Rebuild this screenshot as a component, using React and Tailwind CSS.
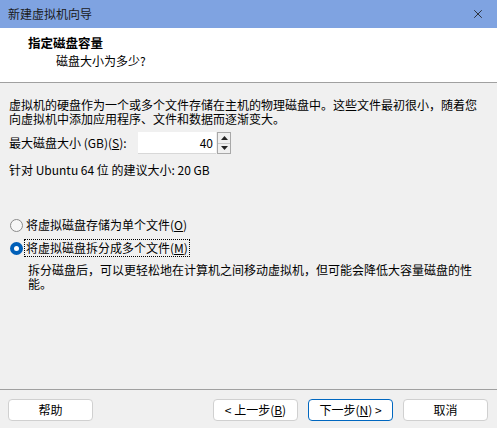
import { X } from 'lucide-react'

const font = { fontFamily: '"Noto Sans CJK SC", "Microsoft YaHei", sans-serif' }

function Radio({ checked, children }) {
  return (
    <div className="flex items-center h-[20px]">
      <span
        className={`w-[13px] h-[13px] ml-[10px] rounded-full flex items-center justify-center shrink-0 ${
          checked ? 'bg-[#005fb8]' : 'bg-[#f7f7f7] border border-[#8a8a8a]'
        }`}
      >
        {checked && <span className="w-[5px] h-[5px] rounded-full bg-white" />}
      </span>
      <span
        className={`ml-[2px] px-px leading-[16px] ${
          checked ? 'outline outline-1 outline-dotted outline-black' : ''
        }`}
      >
        {children}
      </span>
    </div>
  )
}

function Btn({ children, primary }) {
  return (
    <button
      className={`w-[85px] h-[22px] rounded-[4px] bg-white text-[12px] leading-none text-black ${
        primary ? 'border border-[#0067c0]' : 'border border-[#d0d0d0]'
      }`}
      style={font}
    >
      {children}
    </button>
  )
}

export default function App() {
  return (
    <div className="w-[497px] h-[428px] flex flex-col bg-[#f0f0f0] text-[12px] text-black overflow-hidden" style={font}>
      {/* Title bar */}
      <div className="h-[28px] bg-[#7fa3e1] flex items-center justify-between pl-[8px] pr-[12px] shrink-0">
        <span className="text-[12px] text-[#1a1a1a]">新建虚拟机向导</span>
        <X size={14} strokeWidth={1.4} className="text-[#1a1a1a]" />
      </div>

      {/* Header */}
      <div className="h-[55px] bg-white border-b border-[#a0a0a0] shrink-0 pt-[7px]">
        <div className="pl-[28px] font-bold text-[12.5px] leading-[16px]">指定磁盘容量</div>
        <div className="pl-[56px] mt-[2px] leading-[16px]">磁盘大小为多少?</div>
      </div>

      {/* Body */}
      <div className="flex-1 flex flex-col px-[9px] pt-[15px]">
        <p className="leading-[14px]">
          虚拟机的硬盘作为一个或多个文件存储在主机的物理磁盘中。这些文件最初很小，随着您向虚拟机中添加应用程序、文件和数据而逐渐变大。
        </p>

        <div className="flex items-center mt-[6px] h-[22px]">
          <span className="w-[129px] leading-[16px]">
            最大磁盘大小 (GB)(<span className="underline">S</span>):
          </span>
          <div className="w-[78px] h-[22px] bg-white border-b border-[#d8d8d8] flex items-center justify-end pr-[3px]">
            40
          </div>
          <div className="w-[14px] h-[22px] flex flex-col bg-[#f0f0f0] border border-[#a8a8a8] ml-px">
            <div className="flex-1 flex items-center justify-center border-b border-[#c8c8c8]">
              <svg width="7" height="4" viewBox="0 0 7 4"><path d="M0 4 L3.5 0 L7 4 Z" fill="#222" /></svg>
            </div>
            <div className="flex-1 flex items-center justify-center">
              <svg width="7" height="4" viewBox="0 0 7 4"><path d="M0 0 L3.5 4 L7 0 Z" fill="#222" /></svg>
            </div>
          </div>
        </div>

        <div className="mt-[8px] leading-[16px]">针对 Ubuntu 64 位 的建议大小: 20 GB</div>

        <div className="-mx-[9px] mt-[37px]">
          <Radio>
            将虚拟磁盘存储为单个文件(<span className="underline">O</span>)
          </Radio>
          <div className="mt-[3px]">
            <Radio checked>
              将虚拟磁盘拆分成多个文件(<span className="underline">M</span>)
            </Radio>
          </div>
          <p className="pl-[28px] pr-[20px] mt-[5px] leading-[14px]">
            拆分磁盘后，可以更轻松地在计算机之间移动虚拟机，但可能会降低大容量磁盘的性能。
          </p>
        </div>
      </div>

      {/* Footer */}
      <div className="h-[39px] border-t border-[#a0a0a0] shrink-0 flex items-start pt-[9px] px-[8px]">
        <Btn>帮助</Btn>
        <div className="flex-1" />
        <div className="flex gap-[10px] mr-px">
          <Btn>&lt; 上一步(<span className="underline">B</span>)</Btn>
          <Btn primary>下一步(<span className="underline">N</span>) &gt;</Btn>
          <Btn>取消</Btn>
        </div>
      </div>
    </div>
  )
}
